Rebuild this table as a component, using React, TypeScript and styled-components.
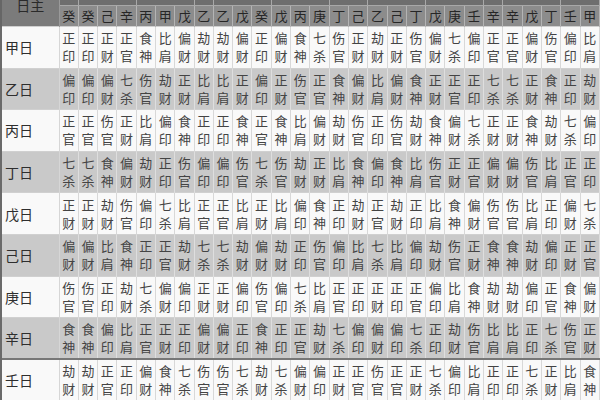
import React from "react";
import styled, { createGlobalStyle } from "styled-components";

const GlobalStyle = createGlobalStyle`
  html, body {
    margin: 0;
    padding: 0;
    background: #ffffff;
    overflow: hidden;
  }
  body {
    font-family: "Noto Sans CJK SC", "Noto Sans", sans-serif;
  }
`;

const STEMS = "甲乙丙丁戊己庚辛壬癸";

// 地支 with the hidden stems in the order the chart lists them
const branches: { name: string; hidden: string }[] = [
  { name: "子", hidden: "癸" },
  { name: "丑", hidden: "癸己辛" },
  { name: "寅", hidden: "丙甲戊" },
  { name: "卯", hidden: "乙" },
  { name: "辰", hidden: "乙戊癸" },
  { name: "巳", hidden: "戊丙庚" },
  { name: "午", hidden: "丁己" },
  { name: "未", hidden: "乙己丁" },
  { name: "申", hidden: "戊庚壬" },
  { name: "酉", hidden: "辛" },
  { name: "戌", hidden: "辛戊丁" },
  { name: "亥", hidden: "壬甲" },
];

const hiddenStems = branches.flatMap((b) => b.hidden.split(""));

const tenGod = (day: string, other: string) => {
  const d = STEMS.indexOf(day);
  const s = STEMS.indexOf(other);
  const ed = Math.floor(d / 2);
  const es = Math.floor(s / 2);
  const same = d % 2 === s % 2;
  if (ed === es) return same ? "比肩" : "劫财";
  if (es === (ed + 1) % 5) return same ? "食神" : "伤官";
  if (es === (ed + 2) % 5) return same ? "偏财" : "正财";
  if (ed === (es + 2) % 5) return same ? "七杀" : "正官";
  return same ? "偏印" : "正印";
};

const Page = styled.div`
  width: 600px;
  height: 400px;
  overflow: hidden;
`;

const Table = styled.table`
  width: 600px;
  margin-top: -17px;
  border-collapse: collapse;
  table-layout: fixed;
  color: #444;
`;

const LabelCol = styled.col`
  width: 58px;
`;

const CornerCell = styled.th`
  background: #7b7b7b;
  color: #2a2a2a;
  font-weight: normal;
  font-size: 14px;
  text-align: center;
  vertical-align: middle;
  border-left: 2px solid #666;
  border-right: 1px solid #9a9a9a;
  padding: 0;
`;

const BranchCell = styled.th`
  height: 22px;
  background: #6e6e6e;
  color: #222;
  font-weight: normal;
  font-size: 13px;
  line-height: 14px;
  vertical-align: top;
  border-right: 1px solid #a8a8a8;
  border-bottom: 1px solid #a8a8a8;
  padding: 0;
`;

const StemCell = styled.th`
  height: 20px;
  background: #8c8c8c;
  color: #262626;
  font-weight: normal;
  font-size: 13px;
  line-height: 20px;
  text-align: center;
  border-right: 1px solid #b4b4b4;
  padding: 0;
`;

const Row = styled.tr<{ $shade: boolean; $strong?: boolean }>`
  height: 41.6px;
  background: ${(p) => (p.$shade ? "#c9c9c9" : "#f9f9f9")};
  border-top: ${(p) => (p.$strong ? "2px solid #777" : "1px solid #d0d0d0")};
`;

const DayCell = styled.td`
  font-size: 14px;
  color: #2e2e2e;
  padding: 0 0 0 3px;
  border-left: 2px solid #6a6a6a;
  border-right: 1px solid #d6d6d6;
  vertical-align: middle;
  white-space: nowrap;
`;

const GodCell = styled.td<{ $shade: boolean }>`
  padding: 0;
  text-align: center;
  font-size: 13px;
  line-height: 18px;
  color: #444;
  border-right: 1px solid ${(p) => (p.$shade ? "#dedede" : "#d8d8d8")};
  vertical-align: middle;
`;

const Char = styled.div`
  display: block;
`;

export default function App() {
  const days = STEMS.split("");
  return (
    <Page>
      <GlobalStyle />
      <Table>
        <colgroup>
          <LabelCol />
          {hiddenStems.map((_, i) => (
            <col key={i} />
          ))}
        </colgroup>
        <thead>
          <tr>
            <CornerCell rowSpan={2}>日主</CornerCell>
            {branches.map((b) => (
              <BranchCell key={b.name} colSpan={b.hidden.length}>
                {b.name}
              </BranchCell>
            ))}
          </tr>
          <tr>
            {hiddenStems.map((s, i) => (
              <StemCell key={i}>{s}</StemCell>
            ))}
          </tr>
        </thead>
        <tbody>
          {days.map((d, r) => {
            const shade = r % 2 === 1;
            return (
              <Row key={d} $shade={shade} $strong={d === "壬"}>
                <DayCell>{d}日</DayCell>
                {hiddenStems.map((s, i) => {
                  const god = tenGod(d, s);
                  return (
                    <GodCell key={i} $shade={shade}>
                      <Char>{god[0]}</Char>
                      <Char>{god[1]}</Char>
                    </GodCell>
                  );
                })}
              </Row>
            );
          })}
        </tbody>
      </Table>
    </Page>
  );
}
